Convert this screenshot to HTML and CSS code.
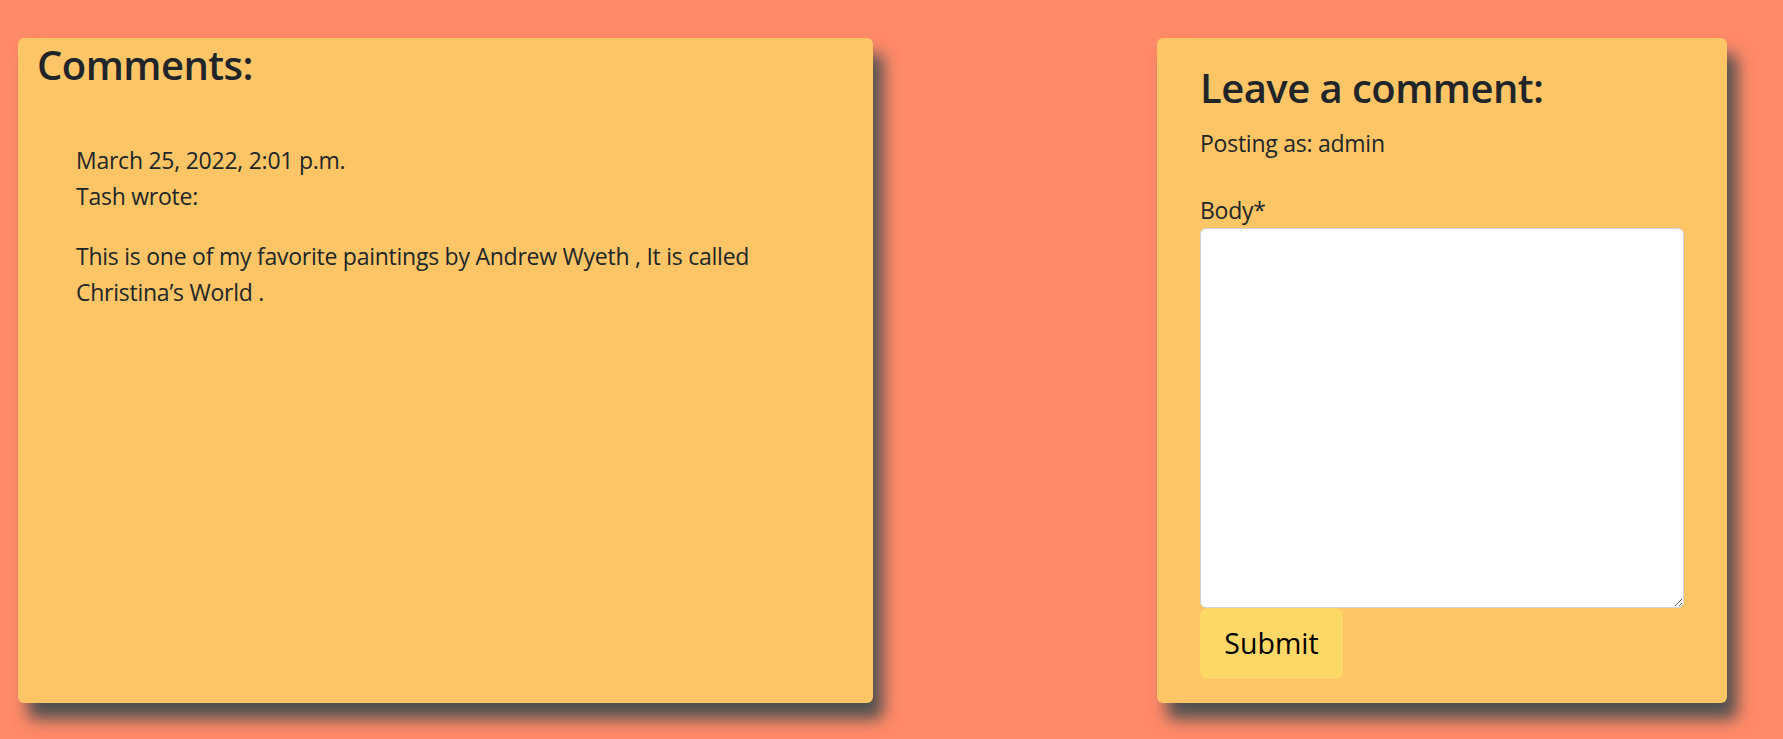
FILE: index.html
```html
<!DOCTYPE html>
<html lang="en">
<head>
<meta charset="utf-8">
<title>Comments</title>
<link rel="stylesheet" href="styles.css">
</head>
<body>
<div class="row">
  <section class="card card-comments">
    <h3 class="title">Comments:</h3>
    <div class="comment">
      <p class="meta">March 25, 2022, 2:01 p.m.<br>Tash wrote:</p>
      <p class="text">This is one of my favorite paintings by Andrew Wyeth , It is called Christina’s World .</p>
    </div>
  </section>
  <section class="card card-form">
    <h3 class="title">Leave a comment:</h3>
    <p class="posting">Posting as: admin</p>
    <form class="form">
      <label class="label" for="body">Body*</label>
      <textarea id="body" class="textarea"></textarea>
      <button type="button" class="btn">Submit</button>
    </form>
  </section>
</div>
</body>
</html>
```
FILE: styles.css
```css
html, body {
  margin: 0;
  padding: 0;
}
body {
  background: #ff8a68;
  color: #212529;
  font-family: "Open Sans", "Noto Sans", sans-serif;
  font-size: 23px;
  letter-spacing: -0.25px;
  line-height: 36px;
}
.row {
  display: flex;
  justify-content: space-between;
  align-items: stretch;
  padding: 38px 56px 36px 18px;
}
.card {
  background: #fdc566;
  border-radius: 6px;
  box-shadow: 10px 16px 16px #505050;
  box-sizing: border-box;
  height: 665px;
}
.card-comments {
  width: 855px;
  padding: 2px 19px 0;
}
.card-form {
  width: 570px;
  padding: 25px 43px 0;
}
.title {
  margin: 0 0 12px;
  font-size: 40px;
  font-weight: 600;
  letter-spacing: -0.55px;
  line-height: 50px;
}
.comment {
  padding: 40px 39px 0;
}
.meta {
  margin: 0 0 24px;
}
.text {
  margin: 0;
}
.posting {
  margin: 0 0 32px;
}
.form {
  display: flex;
  flex-direction: column;
  align-items: flex-start;
}
.label {
  display: block;
  line-height: 35px;
}
.textarea {
  box-sizing: border-box;
  width: 484px;
  height: 380px;
  margin: 0;
  border: 1px solid #ced4da;
  border-radius: 6px;
  background: #fff;
  font: inherit;
  resize: vertical;
}
.btn {
  box-sizing: border-box;
  width: 143px;
  height: 71px;
  margin: 0;
  border: 0;
  border-radius: 8px;
  background: #fed866;
  color: #000;
  font-family: inherit;
  font-size: 28.5px;
  letter-spacing: 0;
  line-height: 45px;
}
```
